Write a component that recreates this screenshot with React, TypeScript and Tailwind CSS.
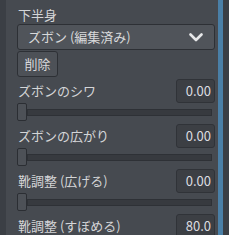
import React from "react";

const font = { fontFamily: '"Noto Sans CJK JP", "Noto Sans", sans-serif' };

function Slider() {
  return (
    <div className="flex h-[18px] shrink-0 items-center">
      <div className="h-[18px] w-[10px] shrink-0 rounded-[2px] border border-[#2b2e33] bg-[#4d5157]" />
      <div className="h-[7px] w-[185px] border border-[#2e3136] bg-[#373a3f]" />
    </div>
  );
}

function Row({ label, value }: { label: string; value: string }) {
  return (
    <div className="flex shrink-0 flex-col">
      <div className="flex h-[24px] shrink-0 items-center justify-between">
        <span className="pl-[1px] text-[13px] leading-[16px] text-[#d4d5d7]">{label}</span>
        <div className="flex h-[24px] w-[39px] items-center justify-end rounded-[3px] border border-[#303338] bg-[#3c3f44] pr-[3px] text-[13px] text-[#dcdde0]">
          {value}
        </div>
      </div>
      <Slider />
    </div>
  );
}

export default function App() {
  return (
    <div className="flex h-[235px] w-[229px] overflow-hidden bg-[#464a50]" style={font}>
      <div className="w-[6px] shrink-0 bg-[#3b3f45]" />
      <div className="flex min-h-0 flex-1 flex-col overflow-hidden pl-[11px] pr-[3px] pt-[7px]">
        <div className="shrink-0 pl-[1px] text-[13px] leading-[16px] text-[#d4d5d7]">下半身</div>
        <div className="mt-[1px] flex h-[26px] shrink-0 items-center justify-between rounded-[3px] border border-[#2d3035] bg-[#50545a] pl-[10px] pr-[11px]">
          <span className="text-[13px] leading-[16px] text-[#d8d9db]">ズボン (編集済み)</span>
          <svg width="14" height="9" viewBox="0 0 14 9">
            <polyline points="1.5,1.5 7,7 12.5,1.5" fill="none" stroke="#e6e7e9" strokeWidth="2.6" strokeLinecap="round" strokeLinejoin="round" />
          </svg>
        </div>
        <div className="mt-[1px] flex h-[26px] w-[41px] shrink-0 items-center justify-center rounded-[3px] border border-[#2d3035] bg-[#4d5157] text-[13px] text-[#d8d9db]">
          削除
        </div>
        <div className="mt-[2px] flex shrink-0 flex-col gap-[3px]">
          <Row label="ズボンのシワ" value="0.00" />
          <Row label="ズボンの広がり" value="0.00" />
          <Row label="靴調整 (広げる)" value="0.00" />
          <Row label="靴調整 (すぼめる)" value="80.0" />
        </div>
      </div>
      <div className="w-[5px] shrink-0 bg-[#4a7fa6]" />
      <div className="w-[6px] shrink-0 bg-[#3a3e44]" />
    </div>
  );
}
